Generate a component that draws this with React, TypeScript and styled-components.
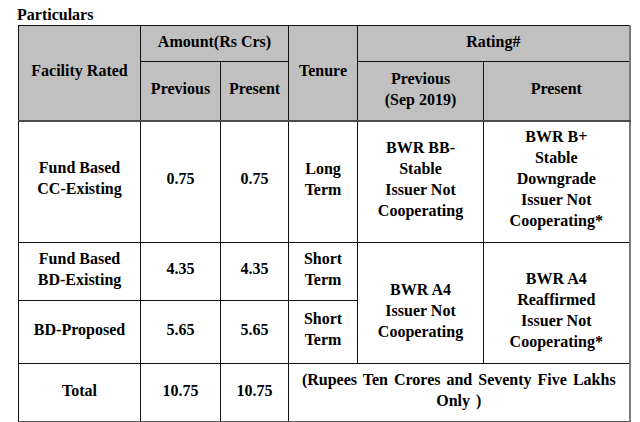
import styled, { createGlobalStyle } from 'styled-components';

const GlobalStyle = createGlobalStyle`
  html, body {
    margin: 0;
    padding: 0;
    background: #fff;
  }
  body {
    font-family: 'Liberation Serif', 'Times New Roman', serif;
    color: #000;
  }
`;

const StyledPage = styled.div`
  width: 640px;
  height: 422px;
  padding: 4px 0 0 17px;
  box-sizing: border-box;
  overflow: hidden;
`;
const StyledTitle = styled.div`
  font-size: 16px;
  font-weight: 700;
  line-height: 21px;
`;
const StyledTable = styled.table`
  margin-left: 1px;
  width: 611px;
  table-layout: fixed;
  border-collapse: collapse;
  border-right: 2px solid #7a7a7a;
  border-bottom: 2px solid #5a5a5a;
  font-size: 16px;
  font-weight: 700;
  line-height: 21px;
`;
const StyledRow = styled.tr<{ $h: number }>`
  height: ${(p) => p.$h}px;
`;
const StyledHead = styled.th<{ $thick?: boolean }>`
  background: #c0c0c0;
  border: 1px solid #111;
  border-bottom: ${(p) => (p.$thick ? '2px solid #4a4a4a' : '1px solid #111')};
  font-weight: 700;
  text-align: center;
  vertical-align: middle;
  padding: 0 2px 4px;
`;
const StyledCell = styled.td<{ $pt?: number; $pb?: number }>`
  border: 1px solid #111;
  text-align: center;
  vertical-align: middle;
  padding: ${(p) => p.$pt ?? 0}px 2px ${(p) => p.$pb ?? 4}px;
`;
const StyledNote = styled(StyledCell)`
  word-spacing: 2px;
`;

const Lines = ({ items }: { items: string[] }) => (
  <>
    {items.map((t, i) => (
      <div key={i}>{t}</div>
    ))}
  </>
);

const App = () => {
  return (
    <>
      <GlobalStyle />
      <StyledPage>
        <StyledTitle>Particulars</StyledTitle>
        <StyledTable>
          <colgroup>
            <col style={{ width: 122 }} />
            <col style={{ width: 80 }} />
            <col style={{ width: 68 }} />
            <col style={{ width: 69 }} />
            <col style={{ width: 126 }} />
            <col style={{ width: 146 }} />
          </colgroup>
          <thead>
            <StyledRow $h={36}>
              <StyledHead rowSpan={2} $thick>
                Facility Rated
              </StyledHead>
              <StyledHead colSpan={2}>Amount(Rs Crs)</StyledHead>
              <StyledHead rowSpan={2} $thick>
                Tenure
              </StyledHead>
              <StyledHead colSpan={2}>Rating#</StyledHead>
            </StyledRow>
            <StyledRow $h={59}>
              <StyledHead $thick>Previous</StyledHead>
              <StyledHead $thick>Present</StyledHead>
              <StyledHead $thick>
                <Lines items={['Previous', '(Sep 2019)']} />
              </StyledHead>
              <StyledHead $thick>Present</StyledHead>
            </StyledRow>
          </thead>
          <tbody>
            <StyledRow $h={122}>
              <StyledCell $pb={8}>
                <Lines items={['Fund Based', 'CC-Existing']} />
              </StyledCell>
              <StyledCell $pb={6}>0.75</StyledCell>
              <StyledCell $pb={6}>0.75</StyledCell>
              <StyledCell $pb={6}>
                <Lines items={['Long', 'Term']} />
              </StyledCell>
              <StyledCell $pb={6}>
                <Lines items={['BWR BB-', 'Stable', 'Issuer Not', 'Cooperating']} />
              </StyledCell>
              <StyledCell $pb={6}>
                <Lines
                  items={['BWR B+', 'Stable', 'Downgrade', 'Issuer Not', 'Cooperating*']}
                />
              </StyledCell>
            </StyledRow>
            <StyledRow $h={58}>
              <StyledCell $pb={6}>
                <Lines items={['Fund Based', 'BD-Existing']} />
              </StyledCell>
              <StyledCell $pb={6}>4.35</StyledCell>
              <StyledCell $pb={6}>4.35</StyledCell>
              <StyledCell $pb={6}>
                <Lines items={['Short', 'Term']} />
              </StyledCell>
              <StyledCell rowSpan={2} $pt={18}>
                <Lines items={['BWR A4', 'Issuer Not', 'Cooperating']} />
              </StyledCell>
              <StyledCell rowSpan={2} $pt={18}>
                <Lines items={['BWR A4', 'Reaffirmed', 'Issuer Not', 'Cooperating*']} />
              </StyledCell>
            </StyledRow>
            <StyledRow $h={63}>
              <StyledCell $pb={6}>BD-Proposed</StyledCell>
              <StyledCell $pb={6}>5.65</StyledCell>
              <StyledCell $pb={6}>5.65</StyledCell>
              <StyledCell $pb={6}>
                <Lines items={['Short', 'Term']} />
              </StyledCell>
            </StyledRow>
            <StyledRow $h={58}>
              <StyledCell>Total</StyledCell>
              <StyledCell>10.75</StyledCell>
              <StyledCell>10.75</StyledCell>
              <StyledNote colSpan={3}>
                <Lines items={['(Rupees Ten Crores and Seventy Five Lakhs', 'Only )']} />
              </StyledNote>
            </StyledRow>
          </tbody>
        </StyledTable>
      </StyledPage>
    </>
  );
};

export default App;
